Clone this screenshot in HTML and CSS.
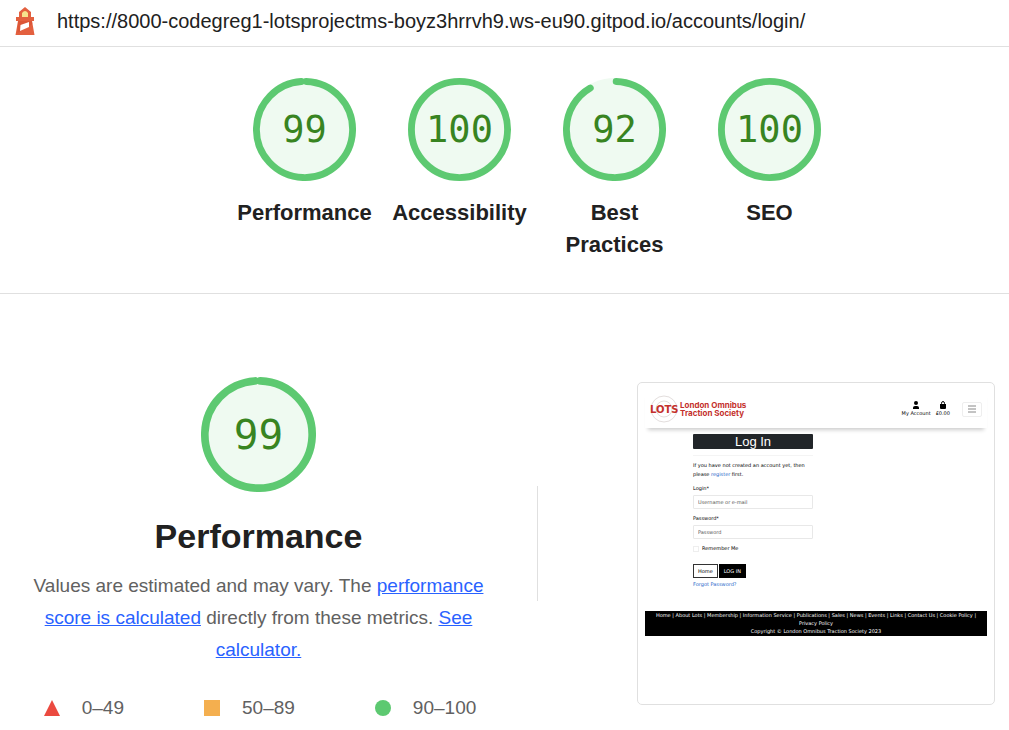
FILE: index.html
```html
<!DOCTYPE html>
<html lang="en">
<head>
<meta charset="utf-8">
<title>Lighthouse Report</title>
<link rel="stylesheet" href="styles.css">
</head>
<body>
<header class="topbar">
  <svg class="topbar-logo" viewBox="0 0 20 28" aria-hidden="true">
    <path fill="#e3603f" d="M4 5 10 0l6 5v5h3v4h-2l2.500 14H.5L3 14H1v-4h3z"/>
    <path fill="#d3492d" d="M3 14h14l.5 3-15 9z" opacity=".4"/>
    <path fill="#f7e28c" d="M7 10V6q3-4 6 0v4z"/>
    <path fill="#fff" d="M5.500 18 14 15v5L5 24z"/>
  </svg>
  <span class="topbar-url">https://8000-codegreg1-lotsprojectms-boyz3hrrvh9.ws-eu90.gitpod.io/accounts/login/</span>
</header>
<main>
  <section class="scores">
    <div class="score">
      <div class="gauge">
        <svg viewBox="0 0 120 120" aria-hidden="true"><circle class="gauge-base" cx="60" cy="60" r="60"/><circle class="gauge-arc" cx="60" cy="60" r="56" stroke-dasharray="345.400 351.900" transform="rotate(-88 60 60)"/></svg>
        <span class="gauge-value">99</span>
      </div>
      <span class="score-label">Performance</span>
    </div>
    <div class="score">
      <div class="gauge">
        <svg viewBox="0 0 120 120" aria-hidden="true"><circle class="gauge-base" cx="60" cy="60" r="60"/><circle class="gauge-arc" cx="60" cy="60" r="56"/></svg>
        <span class="gauge-value">100</span>
      </div>
      <span class="score-label">Accessibility</span>
    </div>
    <div class="score">
      <div class="gauge">
        <svg viewBox="0 0 120 120" aria-hidden="true"><circle class="gauge-base" cx="60" cy="60" r="60"/><circle class="gauge-arc" cx="60" cy="60" r="56" stroke-dasharray="319.800 351.900" transform="rotate(-88 60 60)"/></svg>
        <span class="gauge-value">92</span>
      </div>
      <span class="score-label">Best Practices</span>
    </div>
    <div class="score">
      <div class="gauge">
        <svg viewBox="0 0 120 120" aria-hidden="true"><circle class="gauge-base" cx="60" cy="60" r="60"/><circle class="gauge-arc" cx="60" cy="60" r="56"/></svg>
        <span class="gauge-value">100</span>
      </div>
      <span class="score-label">SEO</span>
    </div>
  </section>

  <section class="category">
    <div class="summary">
      <div class="gauge gauge-large">
        <svg viewBox="0 0 120 120" aria-hidden="true"><circle class="gauge-base" cx="60" cy="60" r="60"/><circle class="gauge-arc" cx="60" cy="60" r="56" stroke-dasharray="345.400 351.900" transform="rotate(-88 60 60)"/></svg>
        <span class="gauge-value">99</span>
      </div>
      <h1 class="summary-title">Performance</h1>
      <p class="summary-text">Values are estimated and may vary. The <a href="#score">performance score is calculated</a> directly from these metrics. <a href="#calculator">See calculator.</a></p>
      <div class="legend">
        <span class="legend-item"><svg viewBox="0 0 16 16" aria-hidden="true"><path fill="#eb4a40" d="M8 0l8 16H0z"/></svg>0–49</span>
        <span class="legend-item"><svg viewBox="0 0 16 16" aria-hidden="true"><path fill="#f4af4f" d="M0 0h16v16H0z"/></svg>50–89</span>
        <span class="legend-item"><svg viewBox="0 0 16 16" aria-hidden="true"><circle fill="#5dc971" cx="8" cy="8" r="8"/></svg>90–100</span>
      </div>
    </div>
    <div class="divider"></div>
    <div class="preview">
      <div class="site-header">
        <div class="site-brand">
          <svg class="site-rings" viewBox="0 0 28 28" aria-hidden="true"><circle cx="14" cy="14" r="13"/><circle cx="14" cy="14" r="8"/></svg>
          <span class="site-lots">LOTS</span>
          <span class="site-name">London Omnibus<br>Traction Society</span>
        </div>
        <div class="site-tools">
          <a class="site-tool" href="#account"><svg viewBox="0 0 8 8" aria-hidden="true"><circle cx="4" cy="2" r="2"/><path d="M1 8V6.500Q1 5 3 5h2q2 0 2 1.500V8z"/></svg>My Account</a>
          <a class="site-tool" href="#bag"><svg viewBox="0 0 8 8" aria-hidden="true"><path d="M1 3h6v4q0 1-1 1H2q-1 0-1-1z"/><path d="M2.500 4V2.500q0-2 1.500-2t1.500 2V4" fill="none" stroke="#000"/></svg>£0.00</a>
          <button class="site-toggle" type="button" aria-label="Menu"><svg viewBox="0 0 10 8" aria-hidden="true"><path d="M1 1h8M1 4h8M1 7h8"/></svg></button>
        </div>
      </div>
      <form class="login">
        <h2 class="login-title">Log In</h2>
        <p class="login-intro">If you have not created an account yet, then please <a href="#register">register</a> first.</p>
        <label class="login-label" for="user">Login*</label>
        <input class="login-input" id="user" type="text" placeholder="Username or e-mail">
        <label class="login-label" for="pass">Password*</label>
        <input class="login-input" id="pass" type="password" placeholder="Password">
        <label class="login-remember"><input type="checkbox">Remember Me</label>
        <div class="login-actions">
          <button class="login-button" type="button">Home</button>
          <button class="login-button login-primary" type="button">LOG IN</button>
        </div>
        <a class="login-forgot" href="#forgot">Forgot Password?</a>
      </form>
      <div class="site-footer">Home | About Lots | Membership | Information Service | Publications | Sales | News | Events | Links | Contact Us | Cookie Policy | Privacy Policy<br>Copyright © London Omnibus Traction Society 2023</div>
    </div>
  </section>
</main>
</body>
</html>
```
FILE: styles.css
```css
* { box-sizing: border-box; }

body {
  margin: 0;
  background: #fff;
  color: #212121;
  font-family: "Liberation Sans", Arial, sans-serif;
  font-size: 19px;
}

.topbar {
  display: flex;
  align-items: center;
  gap: 22px;
  padding: 7px 15px 11px;
  border-bottom: 1px solid #e0e0e0;
}
.topbar-logo { width: 20px; height: 28px; }
.topbar-url { font-size: 20px; line-height: 28px; white-space: nowrap; }

.scores {
  display: flex;
  justify-content: center;
  padding: 31px 0 32px 65px;
  border-bottom: 1px solid #e0e0e0;
}
.score {
  display: flex;
  flex-direction: column;
  align-items: center;
  gap: 16px;
  width: 155px;
  padding: 0 10px;
}
.score-label {
  font-size: 22px;
  font-weight: 700;
  line-height: 32px;
  text-align: center;
}

.gauge {
  display: grid;
  place-items: center;
  width: 103px;
  height: 103px;
}
.gauge svg { grid-area: 1 / 1; width: 100%; height: 100%; }
.gauge-base { fill: #effaf1; }
.gauge-arc {
  fill: none;
  stroke: #5dc971;
  stroke-width: 8;
  stroke-linecap: round;
}
.gauge-value {
  grid-area: 1 / 1;
  color: #388421;
  font-family: "DejaVu Sans Mono", monospace;
  font-size: 37px;
  line-height: 40px;
}
.gauge-large { width: 115px; height: 115px; }
.gauge-large .gauge-value { font-size: 41px; }

.category {
  display: grid;
  grid-template-columns: 517fr 41px 451fr;
  padding-top: 83px;
}
.summary {
  display: flex;
  flex-direction: column;
  align-items: center;
  padding: 0 22px;
}
.summary-title {
  margin: 24px 0 14px;
  font-size: 34px;
  line-height: 40px;
}
.summary-text {
  margin: 0;
  color: #616161;
  line-height: 32px;
  text-align: center;
}
.summary-text a { color: #2962ff; }
.legend {
  display: flex;
  gap: 80px;
  margin-top: 26px;
  padding-left: 3px;
  color: #616161;
  line-height: 32px;
}
.legend-item { display: flex; align-items: center; gap: 22px; }
.legend svg { width: 16px; height: 16px; }
.divider {
  justify-self: center;
  width: 1px;
  height: 115px;
  margin-top: 109px;
  background: #e0e0e0;
}

.preview {
  height: 323px;
  margin: 5px 14px 0 79px;
  padding: 7px;
  border: 1px solid #e0e0e0;
  border-radius: 5px;
  color: #000;
  font-family: "DejaVu Sans", sans-serif;
  font-size: 5px;
  line-height: 9px;
}
.site-header {
  display: flex;
  justify-content: space-between;
  align-items: center;
  height: 38px;
  padding: 0 5px;
  box-shadow: 0 5px 4px -3px #0003;
}
.site-brand {
  display: grid;
  grid-template-columns: 28px auto;
  align-items: center;
  column-gap: 2px;
  color: #c4302c;
  font-weight: 700;
}
.site-rings { grid-area: 1 / 1; width: 28px; height: 28px; fill: none; stroke: #e3dedd; }
.site-lots { grid-area: 1 / 1; font-size: 10px; }
.site-name { font-family: Inter, sans-serif; font-size: 8px; line-height: 8px; }
.site-tools { display: flex; align-items: center; gap: 5px; }
.site-tool {
  display: flex;
  flex-direction: column;
  align-items: center;
  color: #000;
  line-height: 8px;
  text-decoration: none;
}
.site-tool svg { width: 8px; height: 8px; }
.site-toggle {
  display: grid;
  place-items: center;
  width: 20px;
  height: 15px;
  margin-left: 7px;
  padding: 0;
  border: 1px solid #eee;
  border-radius: 2px;
  background: #fff;
}
.site-toggle svg { width: 10px; height: 8px; fill: none; stroke: #888; }

.login {
  display: flex;
  flex-direction: column;
  align-items: flex-start;
  width: 120px;
  margin: 6px 0 0 48px;
}
.login a { color: #1f66c9; text-decoration: none; }
.login-title {
  width: 100%;
  margin: 0;
  border-radius: 1px;
  background: #212529;
  color: #fff;
  font-family: "Liberation Sans", Arial, sans-serif;
  font-size: 13px;
  font-weight: 400;
  line-height: 15px;
  text-align: center;
}
.login-intro {
  width: 100%;
  margin: 6px 0 5px;
  padding-top: 5px;
  border-top: 1px solid #f4f4f4;
}
.login-label { margin-bottom: 2px; }
.login-input {
  width: 100%;
  height: 14px;
  margin: 0 0 5px;
  padding: 0 4px;
  border: 1px solid #e8e8e8;
  border-radius: 1px;
  font: inherit;
}
.login-input::placeholder { color: #555; }
.login-remember { display: flex; align-items: center; gap: 3px; }
.login-remember input {
  appearance: none;
  width: 6px;
  height: 6px;
  margin: 0;
  border: 1px solid #eee;
}
.login-actions { display: flex; gap: 1px; margin: 11px 0 2px; }
.login-button {
  height: 14px;
  padding: 0 4px;
  border: 1px solid #333;
  background: #fff;
  color: #000;
  font: inherit;
}
.login-primary { border-color: #000; background: #000; color: #fff; }
.site-footer {
  margin-top: 22px;
  padding: 0 8px 1px;
  background: #000;
  color: #fff;
  line-height: 8px;
  text-align: center;
}
```
